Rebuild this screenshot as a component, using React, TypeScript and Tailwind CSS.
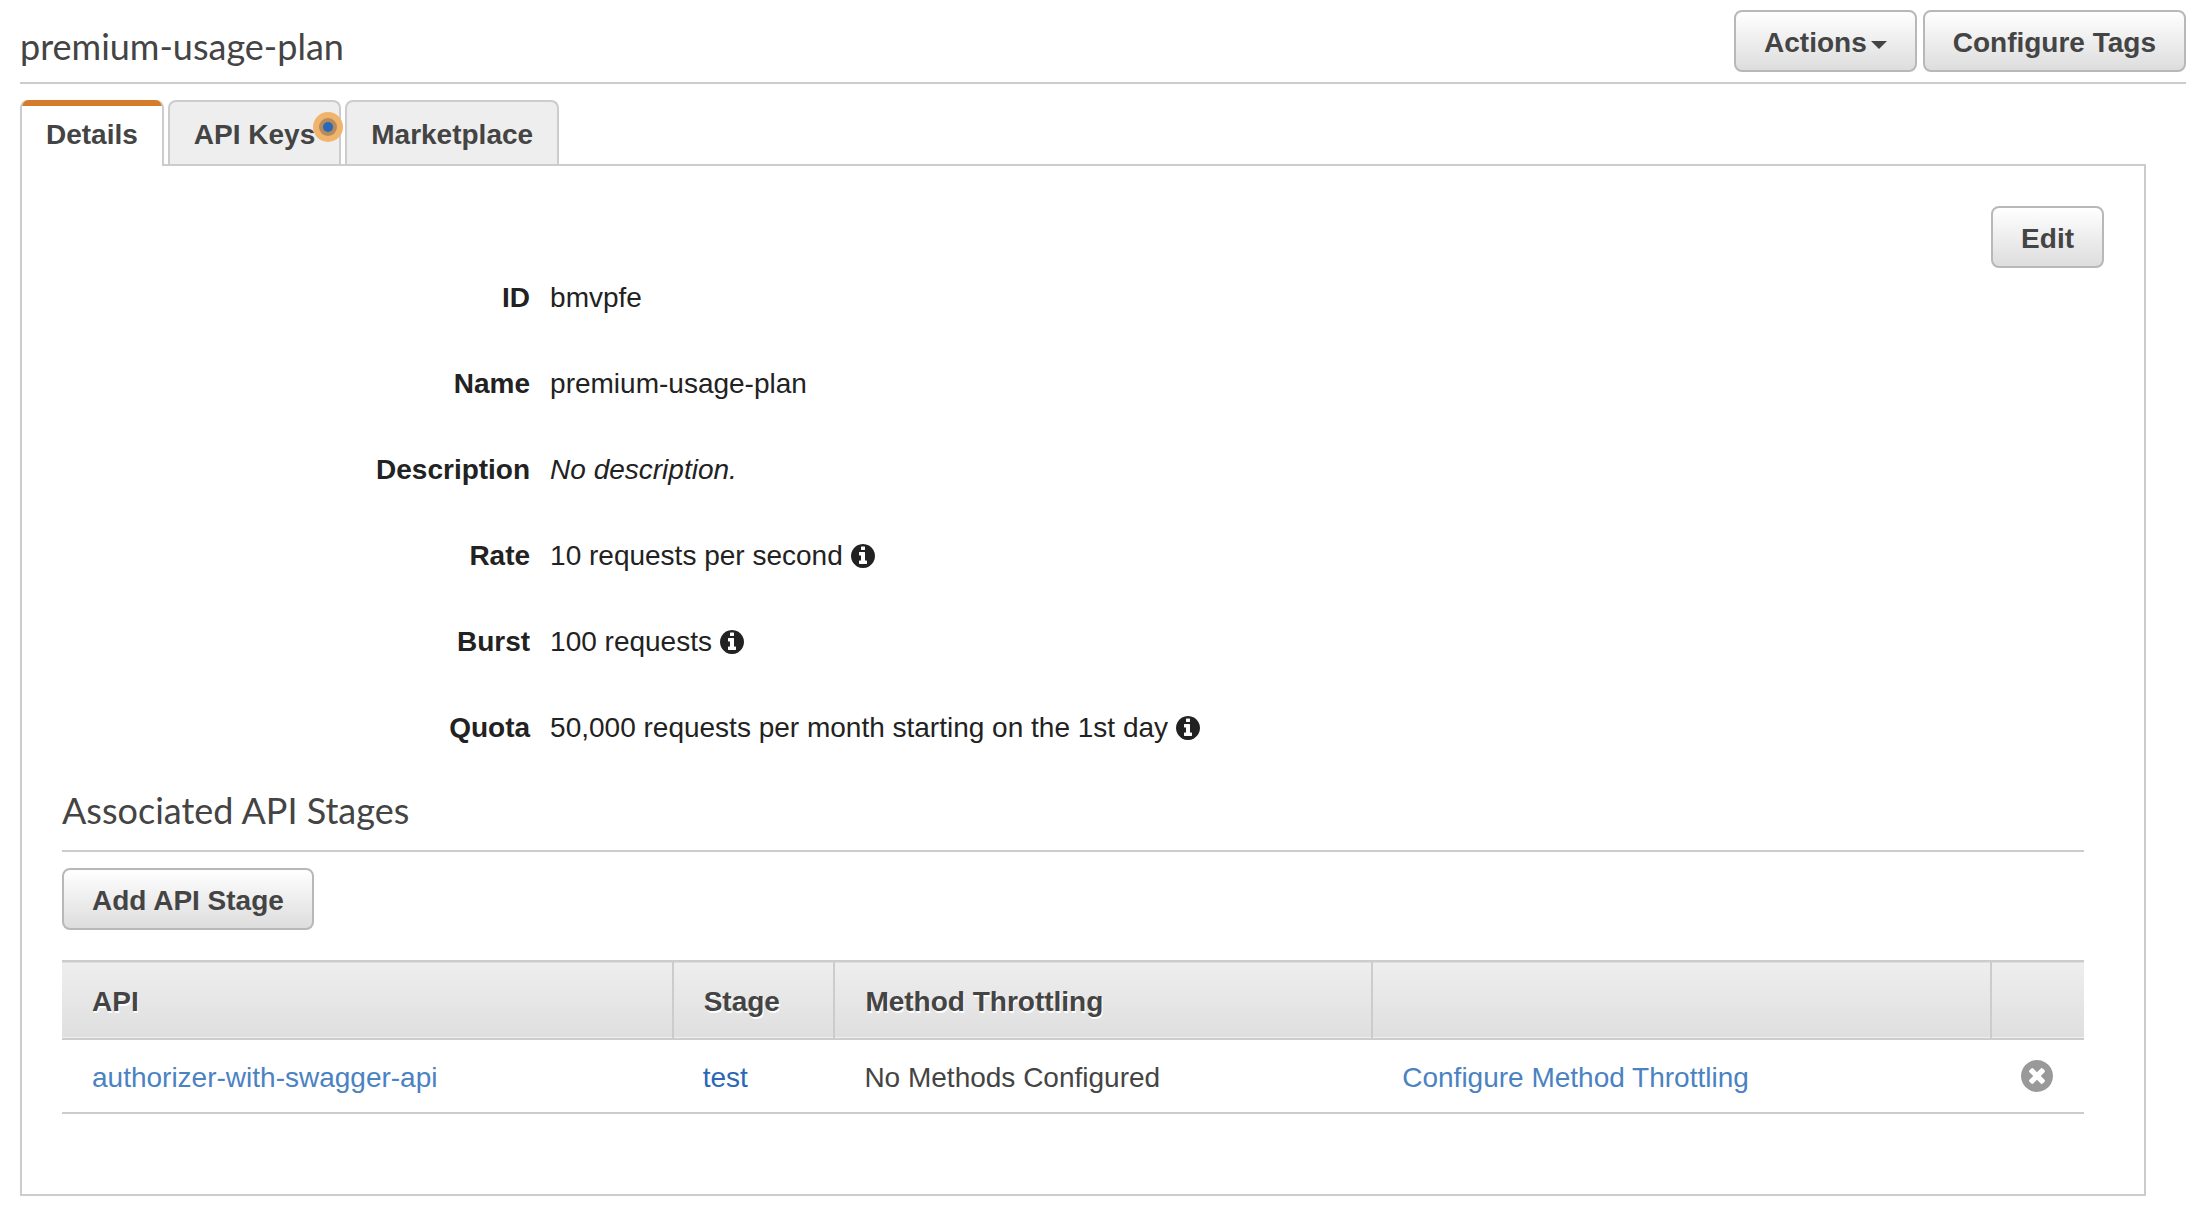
import type { ReactNode } from "react";

function Button({ children }: { children: ReactNode }) {
  return (
    <button
      type="button"
      className="flex h-[62px] shrink-0 items-center rounded-lg border-2 border-[#b8b8b8] bg-linear-to-b from-white to-[#dddddd] px-7 pt-1 font-bold whitespace-nowrap text-[#444]"
    >
      {children}
    </button>
  );
}

function Info() {
  return (
    <svg viewBox="128 128 1536 1536" className="size-6 shrink-0" fill="currentColor" aria-hidden="true">
      <path d="M1152 1376v-160q0-14-9-23t-23-9h-96v-512q0-14-9-23t-23-9h-320q-14 0-23 9t-9 23v160q0 14 9 23t23 9h96v320h-96q-14 0-23 9t-9 23v160q0 14 9 23t23 9h448q14 0 23-9t9-23zm-128-896v-160q0-14-9-23t-23-9h-192q-14 0-23 9t-9 23v160q0 14 9 23t23 9h192q14 0 23-9t9-23zm640 416q0 209-103 385.5t-279.5 279.5-385.5 103-385.5-103-279.5-279.5-103-385.5 103-385.5 279.5-279.5 385.5-103 385.5 103 279.5 279.5 103 385.5z" />
    </svg>
  );
}

function Remove() {
  return (
    <svg viewBox="128 128 1536 1536" className="size-8 text-[#999]" fill="currentColor" aria-hidden="true">
      <path d="M1277 1122q0-26-19-45l-181-181 181-181q19-19 19-45 0-27-19-46l-90-90q-19-19-46-19-26 0-45 19l-181 181-181-181q-19-19-45-19-27 0-46 19l-90 90q-19 19-19 46 0 26 19 45l181 181-181 181q-19 19-19 45 0 27 19 46l90 90q19 19 46 19 26 0 45-19l181-181 181 181q19 19 45 19 27 0 46-19l90-90q19-19 19-46zm387-226q0 209-103 385.5t-279.5 279.5-385.5 103-385.5-103-279.5-279.5-103-385.5 103-385.5 279.5-279.5 385.5-103 385.5 103 279.5 279.5 103 385.5z" />
    </svg>
  );
}

function Row({ label, info, children }: { label: string; info?: boolean; children: ReactNode }) {
  return (
    <div className="flex items-center gap-5">
      <dt className="w-[23.15%] shrink-0 text-right font-bold">{label}</dt>
      <dd className="flex items-center gap-2">
        {children}
        {info && <Info />}
      </dd>
    </div>
  );
}

const inactiveTab =
  "relative h-16 rounded-t-lg border-2 border-b-0 border-[#ccc] bg-[#eee] px-6 pt-1 font-bold whitespace-nowrap";

export default function App() {
  return (
    <main className="bg-white px-4 pb-3.5 pl-5 font-['Liberation_Sans',Arial,sans-serif] text-[28px] leading-10 text-[#444]">
      <header className="flex items-start justify-between border-b-2 border-[#ccc] pt-2.5 pb-2.5">
        <h1 className="pt-3.5 font-[Lato,sans-serif] text-[36px] leading-[44px]">premium-usage-plan</h1>
        <div className="flex gap-1.5">
          <Button>
            Actions
            <svg viewBox="0 0 16 8" className="mt-1 ml-1 h-2 w-4" fill="currentColor" aria-hidden="true">
              <path d="M0 0h16L8 8z" />
            </svg>
          </Button>
          <Button>Configure Tags</Button>
        </div>
      </header>

      <div role="tablist" className="mt-4 flex gap-1">
        <button
          type="button"
          role="tab"
          aria-selected="true"
          className="relative z-10 -mb-0.5 h-[66px] overflow-hidden rounded-t-lg border-x-2 border-[#ccc] bg-white px-6 pt-1 font-bold"
        >
          <span className="absolute inset-x-0 top-0 h-1.5 bg-[#d57b2c]" />
          Details
        </button>
        <button type="button" role="tab" aria-selected="false" className={inactiveTab}>
          API Keys
          <svg viewBox="0 0 30 30" className="absolute top-2.5 -right-1 size-[30px]" aria-hidden="true">
            <circle cx="15" cy="15" r="15" fill="#f0b46c" />
            <circle cx="15" cy="15" r="9" fill="#b48b5c" />
            <circle cx="15" cy="15" r="5" fill="#2a67b8" />
          </svg>
        </button>
        <button type="button" role="tab" aria-selected="false" className={inactiveTab}>
          Marketplace
        </button>
      </div>

      <section className="mr-10 border-2 border-[#ccc] px-10 pt-10 pb-20">
        <div className="flex justify-end">
          <Button>Edit</Button>
        </div>
        <div className="mr-5">
          <dl className="mt-2.5 flex flex-col gap-[46px] text-[#222]">
            <Row label="ID">bmvpfe</Row>
            <Row label="Name">premium-usage-plan</Row>
            <Row label="Description">
              <em>No description.</em>
            </Row>
            <Row label="Rate" info>
              10 requests per second
            </Row>
            <Row label="Burst" info>
              100 requests
            </Row>
            <Row label="Quota" info>
              50,000 requests per month starting on the 1st day
            </Row>
          </dl>

          <h2 className="mt-10 border-b-2 border-[#ccc] pb-[18px] font-[Lato,sans-serif] text-[36px] leading-[44px]">
            Associated API Stages
          </h2>
          <div className="mt-4 flex">
            <Button>Add API Stage</Button>
          </div>

          <table className="mt-[30px] w-full table-fixed text-left">
            <colgroup>
              <col className="w-[30.2%]" />
              <col className="w-[8%]" />
              <col className="w-[26.6%]" />
              <col />
              <col className="w-[93px]" />
            </colgroup>
            <thead>
              <tr className="h-[78px] border-y-2 border-[#ccc] bg-linear-to-b from-[#eee] to-[#dfdfdf] [text-shadow:1px_2px_0_#fff]">
                <th scope="col" className="border-r-2 border-[#ccc] px-[30px] pt-1">API</th>
                <th scope="col" className="border-r-2 border-[#ccc] pt-1 pl-[30px]">Stage</th>
                <th scope="col" className="border-r-2 border-[#ccc] px-[30px] pt-1">Method Throttling</th>
                <th scope="col" className="border-r-2 border-[#ccc]" aria-label="Configuration" />
                <th scope="col" aria-label="Remove" />
              </tr>
            </thead>
            <tbody>
              <tr className="h-[74px] border-b-2 border-[#ccc]">
                <td className="px-[30px] pt-1">
                  <a href="#api" className="text-[#4a82c3]">authorizer-with-swagger-api</a>
                </td>
                <td className="pt-1 pl-[30px]">
                  <a href="#stage" className="text-[#2a67b8]">test</a>
                </td>
                <td className="px-[30px] pt-1">No Methods Configured</td>
                <td className="px-[30px] pt-1">
                  <a href="#throttling" className="text-[#4a82c3]">Configure Method Throttling</a>
                </td>
                <td className="pl-[30px]">
                  <button type="button" aria-label="Remove API stage" className="flex">
                    <Remove />
                  </button>
                </td>
              </tr>
            </tbody>
          </table>
        </div>
      </section>
    </main>
  );
}
